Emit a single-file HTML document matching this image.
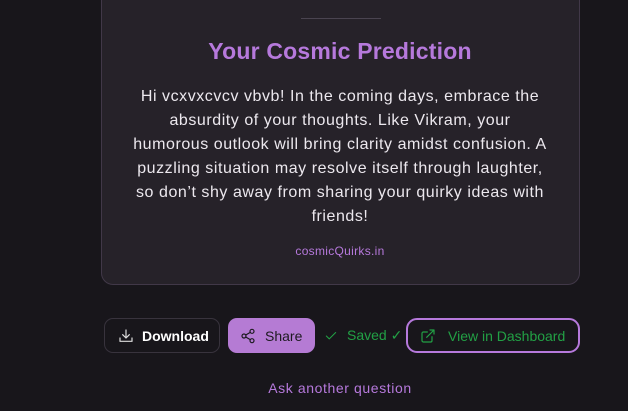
<!DOCTYPE html><html><head><style>
body{margin:0;width:628px;height:411px;background:#18161b;font-family:"Liberation Sans",sans-serif;position:relative;overflow:hidden}
.card{position:absolute;left:101px;top:-20px;width:477px;height:303px;background:#262229;border:1px solid #413848;border-radius:12px}
.hr{position:absolute;left:301px;top:18px;width:80px;height:1px;background:#4a4450}
h1{position:absolute;left:0;width:680px;top:38px;margin:0;text-align:center;font-size:23px;color:#b679dc;font-weight:bold;letter-spacing:0.2px}
.p{position:absolute;left:110px;width:460px;top:85px;text-align:center;color:#ece8ee;font-size:16px;line-height:24px;letter-spacing:0.55px;white-space:nowrap}
.site{position:absolute;left:0;width:680px;top:244px;text-align:center;color:#b679dc;font-size:12px;letter-spacing:0.3px}
.btn{position:absolute;top:318px;height:35px;box-sizing:border-box;border-radius:9px;display:flex;align-items:center;font-size:14px}
svg{fill:none;stroke-width:1.8;stroke-linecap:round;stroke-linejoin:round}
</style></head><body>
<div class="card"></div>
<div class="hr"></div>
<h1>Your Cosmic Prediction</h1>
<div class="p">Hi vcxvxcvcv vbvb! In the coming days, embrace the<br>absurdity of your thoughts. Like Vikram, your<br>humorous outlook will bring clarity amidst confusion. A<br>puzzling situation may resolve itself through laughter,<br>so don’t shy away from sharing your quirky ideas with<br>friends!</div>
<div class="site">cosmicQuirks.in</div>
<div class="btn" style="left:104px;width:116px;border:1px solid #38333d;color:#fff;font-weight:bold"><svg width="16" height="16" viewBox="0 0 24 24" style="stroke:#ddd;margin:0 8px 0 13px"><path d="M12 3v12M7 10l5 5 5-5M3 15v5h18v-5"/></svg>Download</div>
<div class="btn" style="left:228px;width:87px;background:#b57bd4;color:#1d1a20"><svg width="16" height="16" viewBox="0 0 24 24" style="stroke:#1d1a20;margin:0 9px 0 12px"><circle cx="18" cy="5" r="3"/><circle cx="6" cy="12" r="3"/><circle cx="18" cy="19" r="3"/><path d="M8.6 13.5l6.8 4M15.4 6.5l-6.8 4"/></svg>Share</div>
<div class="btn" style="left:324px;width:80px;color:#22a045"><svg width="14" height="14" viewBox="0 0 24 24" style="stroke:#22a045;margin-right:9px"><path d="M4 12l5 5 11-11"/></svg>Saved ✓</div>
<div class="btn" style="left:406px;width:174px;border:2px solid #b679dc;color:#22a045;border-radius:11px"><svg width="16" height="16" viewBox="0 0 24 24" style="stroke:#22a045;margin:0 12px 0 12px"><path d="M18 13v6a2 2 0 0 1-2 2H5a2 2 0 0 1-2-2V8a2 2 0 0 1 2-2h6M15 3h6v6M10 14L21 3"/></svg>View in Dashboard</div>
<div style="position:absolute;left:0;width:680px;top:380px;text-align:center;color:#b679dc;font-size:14px;letter-spacing:0.6px">Ask another question</div>
</body></html>
